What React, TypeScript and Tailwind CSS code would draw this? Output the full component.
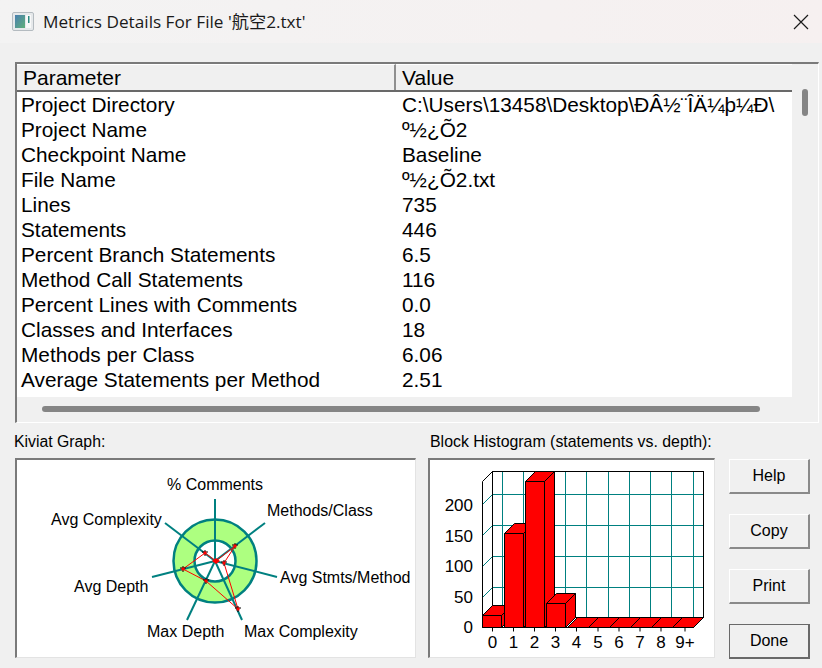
const rows = [
  ['Project Directory', 'C:\\Users\\13458\\Desktop\\ÐÂ½¨ÎÄ¼þ¼Ð\\'],
  ['Project Name', 'º½¿Õ2'],
  ['Checkpoint Name', 'Baseline'],
  ['File Name', 'º½¿Õ2.txt'],
  ['Lines', '735'],
  ['Statements', '446'],
  ['Percent Branch Statements', '6.5'],
  ['Method Call Statements', '116'],
  ['Percent Lines with Comments', '0.0'],
  ['Classes and Interfaces', '18'],
  ['Methods per Class', '6.06'],
  ['Average Statements per Method', '2.51'],
]

const spokes = [
  [200, 39],
  [250, 63],
  [262, 117],
  [227, 160],
  [172, 160],
  [137, 117],
  [150, 63],
]

const markers = [
  [220, 86],
  [209, 103],
  [223, 149],
  [191, 121],
  [168, 109],
  [190, 93],
]

function AppIcon() {
  return (
    <svg width="22" height="19" viewBox="0 0 22 19" aria-hidden="true">
      <defs>
        <linearGradient id="appIconFill" x1="0" y1="0" x2="1" y2="1">
          <stop offset="0" stopColor="#4a7fb0" />
          <stop offset="1" stopColor="#5fb07a" />
        </linearGradient>
      </defs>
      <rect x="0.5" y="0.5" width="21" height="18" rx="1.5" fill="#e6e9eb" stroke="#b4bbc0" />
      <rect x="3" y="3" width="10" height="13" fill="url(#appIconFill)" />
      <rect x="14" y="3" width="5" height="13" fill="#f8f9f9" />
      <rect x="16" y="4" width="1.5" height="7" fill="#2a8a80" />
    </svg>
  )
}

function Kiviat() {
  return (
    <svg width="396" height="195" viewBox="2 0 396 195" className="block" fontFamily="'Liberation Sans', sans-serif" fontSize="16" fill="#000">
      <circle cx="200" cy="101" r="41.5" fill="#adff80" stroke="#008080" strokeWidth="2.5" />
      <circle cx="200" cy="101" r="20.5" fill="#fff" stroke="#008080" strokeWidth="2.5" />
      {spokes.map(([x, y]) => (
        <line key={x} x1="200" y1="101" x2={x} y2={y} stroke="#008080" strokeWidth="2" />
      ))}
      <polygon points="201,101 220,86 209,103 223,149 191,121 168,109 190,93" fill="none" stroke="#ff0000" />
      <path d="M197 101 l4 -3 l4 3 l-4 3 z" fill="#ff0000" />
      {markers.map(([x, y]) => (
        <g key={x}>
          <path d={`M${x - 3} ${y - 1}h6M${x} ${y - 3}v6`} stroke="#000" strokeWidth="1" />
          <path d={`M${x - 1.5} ${y - 1.5}h3v3h-3z`} fill="#ff0000" />
        </g>
      ))}
      <text x="152" y="30">% Comments</text>
      <text x="252" y="56">Methods/Class</text>
      <text x="36" y="65">Avg Complexity</text>
      <text x="265" y="123">Avg Stmts/Method</text>
      <text x="59" y="132">Avg Depth</text>
      <text x="132" y="177">Max Depth</text>
      <text x="229" y="177">Max Complexity</text>
    </svg>
  )
}

const gridY = [35, 66, 97, 128]
const gridX = [72.5, 93.5, 114.5, 135.5, 156.5, 178.5, 199.5, 220.5, 241.5, 263.5]
const bars = [
  { x: 52.5, w: 19, top: 155.5 },
  { x: 74.5, w: 19, top: 73.5 },
  { x: 95.5, w: 19, top: 21.5 },
  { x: 116.5, w: 19, top: 143.5 },
  { x: 137.5, w: 21, top: 167.5 },
  { x: 158.5, w: 21, top: 167.5 },
  { x: 179.5, w: 21, top: 167.5 },
  { x: 200.5, w: 21, top: 167.5 },
  { x: 221.5, w: 21, top: 167.5 },
  { x: 242.5, w: 21, top: 167.5 },
]
const yLabels = [['200', 51], ['150', 82], ['100', 112], ['50', 143], ['0', 173]]
const xLabels = [['0', 62.5], ['1', 83.5], ['2', 104.5], ['3', 125.5], ['4', 146.5], ['5', 168], ['6', 189], ['7', 210], ['8', 231], ['9+', 255]]

function Histogram() {
  return (
    <svg width="284" height="195" viewBox="0 0 284 195" className="block" fontFamily="'Liberation Sans', sans-serif" fontSize="16" fill="#000">
      {gridX.map((x) => (
        <line key={x} x1={x} y1="11.5" x2={x} y2="157.5" stroke="#008080" />
      ))}
      {gridY.map((y) => (
        <g key={y}>
          <line x1="62.5" y1={y - 0.5} x2="273.5" y2={y - 0.5} stroke="#008080" />
          <line x1="52.5" y1={y + 9.5} x2="62.5" y2={y - 0.5} stroke="#008080" />
        </g>
      ))}
      <rect x="62.5" y="11.5" width="211" height="146" fill="none" stroke="#000" />
      <path d="M52.5 167.5 V21.5 L62.5 11.5" fill="none" stroke="#000" />
      <line x1="52.5" y1="167.5" x2="263.5" y2="167.5" stroke="#000" />
      <line x1="263.5" y1="167.5" x2="273.5" y2="157.5" stroke="#000" />
      {bars.map((b) => (
        <g key={b.x} stroke="#000" fill="#ff0000" strokeLinejoin="bevel">
          <path d={`M${b.x} ${b.top} l10 -10 h${b.w} l-10 10 z`} />
          <path d={`M${b.x + b.w} ${b.top} l10 -10 V157.5 l-10 10 z`} />
          <rect x={b.x} y={b.top} width={b.w} height={167.5 - b.top} />
        </g>
      ))}
      {xLabels.map(([t, x]) => (
        <line key={t} x1={Number(x)} y1="167.5" x2={Number(x)} y2="171.5" stroke="#000" />
      ))}
      {yLabels.map(([t, y]) => (
        <text key={t} x="43" y={Number(y)} textAnchor="end" fontSize="17">{t}</text>
      ))}
      {xLabels.map(([t, x]) => (
        <text key={t} x={Number(x)} y="188" textAnchor="middle" fontSize="17">{t}</text>
      ))}
    </svg>
  )
}

function DialogButton({ label, isDefault }: { label: string; isDefault?: boolean }) {
  return (
    <button
      className={
        'w-[81px] h-[35px] bg-[#f0f0f0] text-[16px] text-black border-t border-l border-t-white border-l-white ' +
        (isDefault ? 'border-r-2 border-b-2 border-r-[#696969] border-b-[#696969] outline outline-[#696969] -outline-offset-1' : 'border-r-2 border-b-2 border-r-[#8a8a8a] border-b-[#8a8a8a]')
      }
    >
      {label}
    </button>
  )
}

export default function App() {
  return (
    <div className="w-[822px] h-[668px] bg-[#f0f0f0] font-['Liberation_Sans',sans-serif] text-black overflow-hidden">
      <div className="h-[43px] bg-gradient-to-r from-[#f3f3f3] to-[#f6f0f0] flex items-center pl-[12px] pr-[13px]">
        <AppIcon />
        <div className="ml-[9px] text-[17.2px] text-[#1a1a1a] font-['Open_Sans','Noto_Sans_CJK_SC',sans-serif] flex-1">
          Metrics Details For File '航空2.txt'
        </div>
        <svg width="16" height="16" viewBox="0 0 16 16" aria-hidden="true">
          <path d="M1 1 L15 15 M15 1 L1 15" stroke="#1a1a1a" strokeWidth="1.2" />
        </svg>
      </div>

      <div className="ml-[15px] mr-[3px] mt-[19px] h-[361px] border-t-2 border-l-2 border-t-[#7a7a7a] border-l-[#7a7a7a] border-r border-b border-r-white border-b-white flex flex-col">
        <div className="flex flex-1 min-h-0">
          <div className="flex-1 min-w-0 flex flex-col">
            <div className="h-[28px] flex shrink-0 text-[21px] leading-[25px] border-b-2 border-b-[#696969]">
              <div className="w-[379px] pl-[6px] border-r-2 border-r-[#8f8f8f] border-t border-t-white">Parameter</div>
              <div className="flex-1 pl-[6px] border-t border-t-white">Value</div>
            </div>
            <div className="flex-1 bg-white">
              {rows.map(([name, value]) => (
                <div key={name} className="flex h-[25px] text-[20.8px] leading-[25px] whitespace-nowrap">
                  <div className="w-[385px] pl-[4px]">{name}</div>
                  <div>{value}</div>
                </div>
              ))}
            </div>
          </div>
          <div className="w-[26px] shrink-0 pl-[10px] pt-[25px]">
            <div className="w-[6px] h-[27px] rounded-full bg-[#858585]" />
          </div>
        </div>
        <div className="h-[25px] shrink-0 pl-[25px] pt-[9px]">
          <div className="w-[718px] h-[6px] rounded-full bg-[#858585]" />
        </div>
      </div>

      <div className="mt-[10px] ml-[15px] flex">
        <div className="w-[401px]">
          <div className="h-[18px] text-[15.8px] leading-[18px] -ml-[1px]">Kiviat Graph:</div>
          <div className="mt-[7px] w-[401px] h-[200px] bg-white border-t-2 border-l-2 border-t-[#7a7a7a] border-l-[#7a7a7a] border-r border-b border-r-[#e3e3e3] border-b-[#e3e3e3]">
            <Kiviat />
          </div>
        </div>
        <div className="ml-[12px] w-[287px]">
          <div className="h-[18px] text-[15.9px] leading-[18px] ml-[2px] whitespace-nowrap">Block Histogram (statements vs. depth):</div>
          <div className="mt-[7px] w-[287px] h-[200px] bg-white border-t-2 border-l-2 border-t-[#7a7a7a] border-l-[#7a7a7a] border-r border-b border-r-[#e3e3e3] border-b-[#e3e3e3]">
            <Histogram />
          </div>
        </div>
        <div className="ml-[14px] pt-[26px] flex flex-col gap-[20px]">
          <DialogButton label="Help" />
          <DialogButton label="Copy" />
          <DialogButton label="Print" />
          <DialogButton label="Done" isDefault />
        </div>
      </div>
    </div>
  )
}
